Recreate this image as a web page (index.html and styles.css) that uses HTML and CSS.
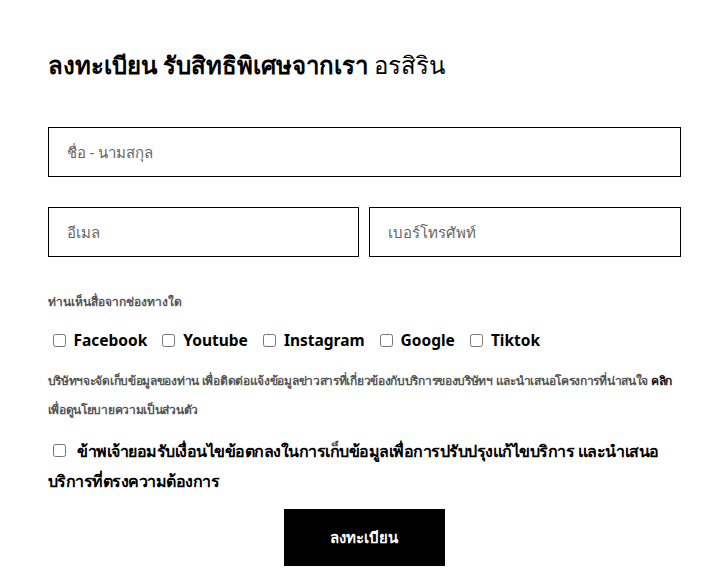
FILE: index.html
```
<!DOCTYPE html>
<html lang="th">
<head>
	<meta charset="UTF-8">
	<title>register</title>
	<link rel="stylesheet" href="styles.css">
</head>
<body>
	<div id="register">
		<h2 class="title">ลงทะเบียน รับสิทธิพิเศษจากเรา <span class="brand">อรสิริน</span></h2>
		<div class="field">
			<input type="text" placeholder="ชื่อ - นามสกุล">
		</div>
		<div class="field two">
			<input type="text" placeholder="อีเมล">
			<input type="text" placeholder="เบอร์โทรศัพท์">
		</div>
		<p class="label">ท่านเห็นสื่อจากช่องทางใด</p>
		<ul class="channels">
			<li><label><input type="checkbox"> Facebook</label></li>
			<li><label><input type="checkbox"> Youtube</label></li>
			<li><label><input type="checkbox"> Instagram</label></li>
			<li><label><input type="checkbox"> Google</label></li>
			<li><label><input type="checkbox"> Tiktok</label></li>
		</ul>
		<p class="policy">บริษัทฯจะจัดเก็บข้อมูลของท่าน เพื่อติดต่อแจ้งข้อมูลข่าวสารที่เกี่ยวข้องกับบริการของบริษัทฯ และนำเสนอโครงการที่น่าสนใจ <a href="#">คลิก</a> เพื่อดูนโยบายความเป็นส่วนตัว</p>
		<p class="accept"><input type="checkbox"> ข้าพเจ้ายอมรับเงื่อนไขข้อตกลงในการเก็บข้อมูลเพื่อการปรับปรุงแก้ไขบริการ และนำเสนอบริการที่ตรงความต้องการ</p>
		<div class="submit">
			<button type="button">ลงทะเบียน</button>
		</div>
	</div>
</body>
</html>
```

FILE: styles.css
```
body {
	margin: 0;
	background: #fff;
	font-family: "Noto Sans", sans-serif;
	color: #000;
}
ul {
	margin: 0;
	padding: 0;
	list-style: none;
}
#register {
	width: 633px;
	margin: 0 auto;
	padding-top: 45px;
}
.title {
	margin: 0 0 42px;
	font-size: 24px;
	line-height: 40px;
	font-weight: 700;
}
.brand {
	font-weight: 300;
}
.field {
	display: flex;
	gap: 10px;
	margin-bottom: 30px;
}
.field input {
	flex: 1;
	min-width: 0;
	height: 50px;
	box-sizing: border-box;
	border: 1.5px solid #000;
	padding: 0 18px;
	font-family: inherit;
	font-size: 15px;
	outline: none;
}
.field input::placeholder {
	color: #666;
}
.label {
	margin: 35px 0 18px;
	font-size: 12px;
	font-weight: 600;
	color: #555;
}
.channels {
	display: flex;
	gap: 15px;
	padding-left: 5px;
	margin-bottom: 15px;
}
.channels label {
	display: flex;
	align-items: center;
	gap: 8px;
	font-size: 15.5px;
	font-weight: 700;
}
input[type="checkbox"] {
	width: 13px;
	height: 13px;
	margin: 0;
}
.policy {
	margin: 0;
	font-size: 12px;
	line-height: 29px;
	font-weight: 600;
	letter-spacing: -0.3px;
	color: #555;
}
.policy a {
	color: #111;
	text-decoration: none;
}
.accept {
	margin: 12px 0 13px;
	font-size: 16px;
	line-height: 30px;
	font-weight: 600;
	letter-spacing: -0.5px;
}
.accept input {
	margin: 0 8px 0 5px;
}
.submit {
	text-align: center;
}
.submit button {
	width: 161px;
	height: 57px;
	border: 0;
	background: #000;
	color: #fff;
	font-family: inherit;
	font-size: 15px;
	font-weight: 700;
}
```
